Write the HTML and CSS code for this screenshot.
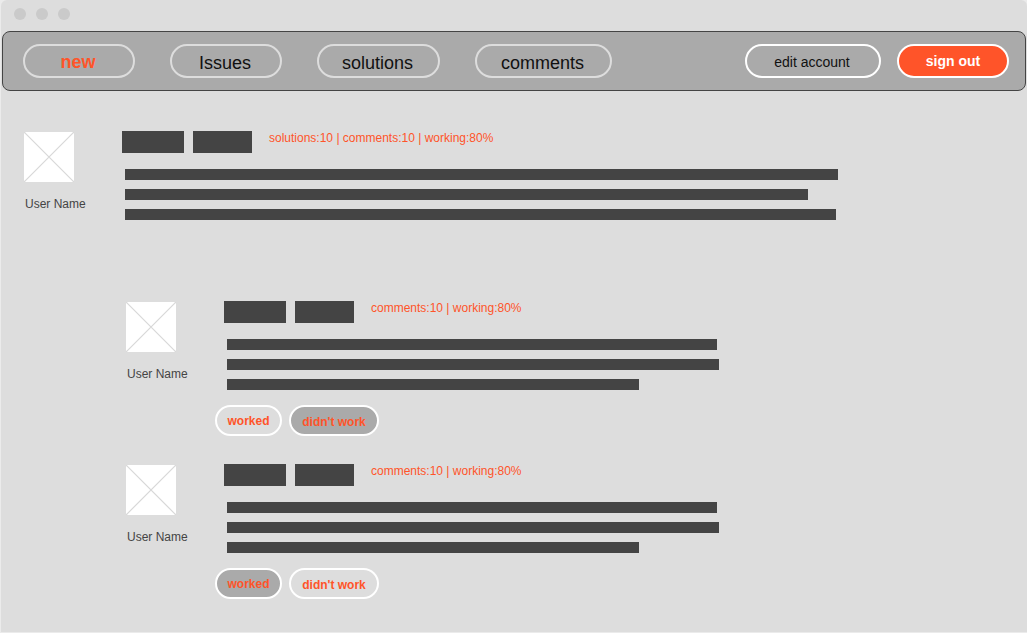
FILE: index.html
```html
<!DOCTYPE html>
<html lang="en">
<head>
<meta charset="utf-8">
<meta name="viewport" content="width=device-width, initial-scale=1">
<title>New issues</title>
<link rel="stylesheet" href="styles.css">
</head>
<body>
<div class="window">
  <div class="titlebar"><span class="dot"></span><span class="dot"></span><span class="dot"></span></div>
  <header class="toolbar">
    <nav class="tabs">
      <a class="pill tab tab-active" href="#new">new</a>
      <a class="pill tab" href="#issues">Issues</a>
      <a class="pill tab tab-medium" href="#solutions">solutions</a>
      <a class="pill tab tab-wide" href="#comments">comments</a>
    </nav>
    <div class="account">
      <button class="pill edit" type="button">edit account</button>
      <button class="pill signout" type="button">sign out</button>
    </div>
  </header>
  <main class="thread">
    <article class="post">
      <div class="author">
        <svg class="avatar" viewBox="0 0 50 50" aria-hidden="true"><rect width="50" height="50" rx="2" fill="#fff"/><path d="M0 0L50 50M50 0L0 50" stroke="#d8d8d8" stroke-width="1.2"/></svg>
        <span class="name">User Name</span>
      </div>
      <div class="content">
        <div class="heading"><span class="word word-long"></span><span class="word"></span><span class="stats">solutions:10 | comments:10 | working:80%</span></div>
        <div class="lines"><span class="line" style="width:713px"></span><span class="line" style="width:683px"></span><span class="line" style="width:711px"></span></div>
      </div>
    </article>
    <section class="replies">
      <article class="post">
        <div class="author">
          <svg class="avatar" viewBox="0 0 50 50" aria-hidden="true"><rect width="50" height="50" rx="2" fill="#fff"/><path d="M0 0L50 50M50 0L0 50" stroke="#d8d8d8" stroke-width="1.2"/></svg>
          <span class="name">User Name</span>
        </div>
        <div class="content">
          <div class="heading"><span class="word word-long"></span><span class="word"></span><span class="stats">comments:10 | working:80%</span></div>
          <div class="lines"><span class="line" style="width:490px"></span><span class="line" style="width:492px"></span><span class="line" style="width:412px"></span></div>
          <div class="votes">
            <button class="pill vote" type="button">worked</button>
            <button class="pill vote vote-no vote-on" type="button">didn't work</button>
          </div>
        </div>
      </article>
      <article class="post">
        <div class="author">
          <svg class="avatar" viewBox="0 0 50 50" aria-hidden="true"><rect width="50" height="50" rx="2" fill="#fff"/><path d="M0 0L50 50M50 0L0 50" stroke="#d8d8d8" stroke-width="1.2"/></svg>
          <span class="name">User Name</span>
        </div>
        <div class="content">
          <div class="heading"><span class="word word-long"></span><span class="word"></span><span class="stats">comments:10 | working:80%</span></div>
          <div class="lines"><span class="line" style="width:490px"></span><span class="line" style="width:492px"></span><span class="line" style="width:412px"></span></div>
          <div class="votes">
            <button class="pill vote vote-on" type="button">worked</button>
            <button class="pill vote vote-no" type="button">didn't work</button>
          </div>
        </div>
      </article>
    </section>
  </main>
</div>
</body>
</html>
```
FILE: styles.css
```css
* { box-sizing: border-box; }

body {
  margin: 0;
  background: #ebebeb;
  color: #444;
  font: 12px/14px "Liberation Sans", Arial, sans-serif;
}

.window {
  display: flex;
  flex-direction: column;
  min-height: calc(100vh - 1px);
  margin: 0 0 1px 1px;
  border-radius: 6px 6px 0 0;
  background: #ddd;
}

.titlebar {
  display: flex;
  gap: 10px;
  padding: 8px 13px 11px;
}

.dot {
  width: 12px;
  height: 12px;
  border-radius: 50%;
  background: #cacaca;
}

.toolbar {
  display: flex;
  flex-wrap: wrap;
  align-items: center;
  justify-content: space-between;
  gap: 12px;
  margin: 0 1px;
  padding: 12px 16px 12px 20px;
  border: 1px solid #444;
  border-radius: 8px;
  background: #aaa;
}

.tabs {
  display: flex;
  flex-wrap: wrap;
  gap: 12px 35px;
}

.account {
  display: flex;
  gap: 16px;
}

.pill {
  display: flex;
  align-items: center;
  justify-content: center;
  height: 34px;
  border: 2px solid #fff;
  border-radius: 17px;
  background: transparent;
  color: #111;
  font-family: inherit;
  text-decoration: none;
  white-space: nowrap;
  cursor: pointer;
}

.tab {
  min-width: 112px;
  padding: 4px 22px 0 20px;
  border-color: #ddd;
  font-size: 18px;
  line-height: 20px;
}

.tab-active {
  padding-top: 2px;
  color: #ff5429;
  font-weight: bold;
}

.tab-medium {
  min-width: 123px;
}

.tab-wide {
  min-width: 137px;
}

.edit {
  min-width: 136px;
  padding: 2px 24px 0 22px;
  font-size: 14px;
}

.signout {
  min-width: 112px;
  padding: 0 24px;
  background: #ff5429;
  color: #fff;
  font-size: 14px;
  font-weight: bold;
}

.thread {
  padding: 40px 18px 32px 23px;
}

.post {
  display: flex;
}

.author {
  flex: none;
  display: flex;
  flex-direction: column;
  width: 98px;
  padding-top: 1px;
}

.avatar {
  width: 50px;
  height: 50px;
}

.name {
  margin-top: 15px;
  padding-left: 1px;
}

.content {
  flex: 1;
  min-width: 0;
}

.heading {
  display: flex;
  gap: 9px;
}

.word {
  width: 59px;
  height: 22px;
  background: #444;
}

.word-long {
  width: 62px;
}

.stats {
  padding-left: 8px;
  color: #ff5429;
}

.lines {
  display: flex;
  flex-direction: column;
  gap: 9px;
  padding: 16px 0 0 3px;
}

.line {
  max-width: 100%;
  height: 11px;
  background: #444;
}

.replies {
  display: flex;
  flex-direction: column;
  gap: 28px;
  margin-top: 81px;
  padding-left: 102px;
}

.votes {
  display: flex;
  gap: 7px;
  margin: 15px 0 0 -9px;
}

.vote {
  min-width: 67px;
  height: 31px;
  padding: 0 8px;
  border-radius: 16px;
  color: #ff5429;
  font-size: 12px;
  font-weight: bold;
}

.vote-no {
  min-width: 90px;
  padding-top: 2px;
}

.vote-on {
  background: #aaa;
}
```
